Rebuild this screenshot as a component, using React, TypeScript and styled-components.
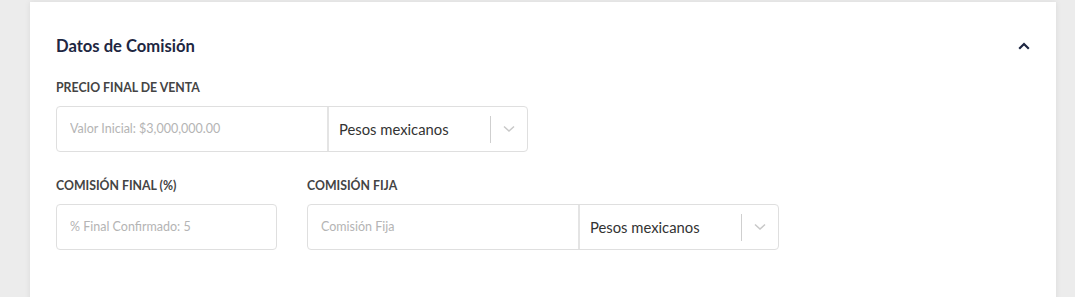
import React from "react";
import styled, { createGlobalStyle } from "styled-components";

const Global = createGlobalStyle`
  html, body { margin: 0; padding: 0; background: #ececec; }
  body { font-family: Lato, "Open Sans", sans-serif; }
  * { box-sizing: border-box; }
`;

const Page = styled.div`
  padding: 2px 19px 0 30px;
  height: 297px;
  overflow: hidden;
`;

const Card = styled.section`
  background: #fff;
  height: 320px;
  padding: 34px 26px 0 26px;
  box-shadow: 0 0 6px rgba(0, 0, 0, 0.08);
`;

const Header = styled.div`
  display: flex;
  align-items: center;
  justify-content: space-between;
  height: 20px;
`;

const Title = styled.h2`
  margin: 0;
  font-size: 16.6px;
  font-weight: 700;
  color: #1e2742;
  line-height: 20px;
`;

const Toggle = styled.button`
  border: 0;
  background: none;
  padding: 0;
  margin-right: 0;
  display: flex;
  cursor: pointer;
`;

const Grid = styled.div`
  display: grid;
  grid-template-columns: repeat(3, 221px);
  column-gap: 30px;
  row-gap: 26px;
  margin-top: 24px;
`;

const Field = styled.div<{ $span?: number }>`
  grid-column: span ${(p) => p.$span ?? 1};
  display: flex;
  flex-direction: column;
`;

const Label = styled.label`
  font-size: 12.3px;
  font-weight: 700;
  color: #444;
  line-height: 16px;
  text-transform: uppercase;
  margin-bottom: 10px;
`;

const Group = styled.div`
  display: flex;
  height: 46px;
  border: 1px solid #dfdfdf;
  border-radius: 4px;
`;

const Input = styled.input`
  flex: 1;
  min-width: 0;
  border: 0;
  outline: none;
  background: transparent;
  padding: 0 13px 1px;
  font-family: Lato, sans-serif;
  font-size: 12.5px;
  color: #333;
  &::placeholder { color: #b4b4b4; }
`;

const Single = styled.div`
  display: flex;
  height: 46px;
  border: 1px solid #dfdfdf;
  border-radius: 4px;
`;

const Select = styled.div`
  width: 200px;
  display: flex;
  align-items: center;
  border-left: 2px solid #e4e4e4;
  padding-left: 10px;
`;

const SelectValue = styled.span`
  flex: 1;
  font-size: 14.8px;
  color: #333;
`;

const Divider = styled.span`
  width: 1px;
  height: 27px;
  background: #cfcfcf;
`;

const Arrow = styled.span`
  width: 36px;
  display: flex;
  justify-content: center;
  align-items: center;
`;

const ChevronDown = () => (
  <svg width="12" height="8" viewBox="0 0 12 8">
    <path d="M1 1.5 L6 6 L11 1.5" fill="none" stroke="#c8c8c8" strokeWidth="1.5" />
  </svg>
);

const ChevronUp = () => (
  <svg width="12" height="8" viewBox="0 0 12 8">
    <path d="M1.2 6.8 L6 2 L10.8 6.8" fill="none" stroke="#1e2742" strokeWidth="2.2" />
  </svg>
);

const CurrencySelect = () => (
  <Select>
    <SelectValue>Pesos mexicanos</SelectValue>
    <Divider />
    <Arrow>
      <ChevronDown />
    </Arrow>
  </Select>
);

export default function App() {
  return (
    <>
      <Global />
      <Page>
        <Card>
          <Header>
            <Title>Datos de Comisión</Title>
            <Toggle aria-label="Contraer">
              <ChevronUp />
            </Toggle>
          </Header>
          <Grid>
            <Field $span={2}>
              <Label>Precio final de venta</Label>
              <Group>
                <Input placeholder="Valor Inicial: $3,000,000.00" />
                <CurrencySelect />
              </Group>
            </Field>
            <div />
            <Field>
              <Label>Comisión final (%)</Label>
              <Single>
                <Input placeholder="% Final Confirmado: 5" />
              </Single>
            </Field>
            <Field $span={2}>
              <Label>Comisión fija</Label>
              <Group>
                <Input placeholder="Comisión Fija" />
                <CurrencySelect />
              </Group>
            </Field>
          </Grid>
        </Card>
      </Page>
    </>
  );
}
